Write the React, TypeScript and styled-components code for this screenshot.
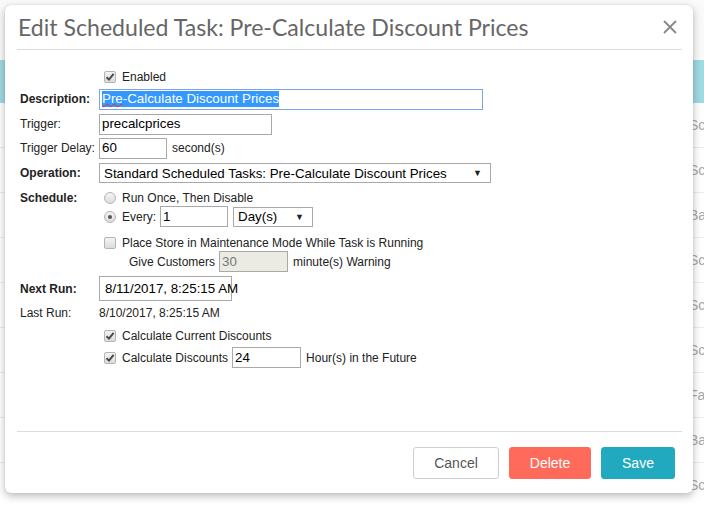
import React from "react";
import styled, { createGlobalStyle } from "styled-components";

const GlobalStyle = createGlobalStyle`
  html, body {
    margin: 0;
    padding: 0;
    background: #fafafa;
    font-family: "Liberation Sans", Arial, sans-serif;
  }
`;

const Page = styled.div`
  position: relative;
  width: 704px;
  height: 506px;
  overflow: hidden;
  background: #fafafa;
`;

const TopStrip = styled.div`
  height: 60px;
`;

const TableHead = styled.div`
  height: 43px;
  background: #a0dae3;
`;

const TableRow = styled.div`
  height: 44px;
  display: flex;
  align-items: center;
  padding-left: 689px;
  border-bottom: 1px solid #ececec;
  background: #fff;
  color: #a8a8a8;
  font-size: 14px;
  white-space: nowrap;
`;

const Modal = styled.div`
  position: absolute;
  left: 5px;
  top: 5px;
  width: 688px;
  height: 488px;
  box-sizing: border-box;
  padding: 0 11px 0 12px;
  display: flex;
  flex-direction: column;
  background: #fff;
  border-radius: 6px;
  box-shadow: 0 3px 9px rgba(0, 0, 0, 0.28), 0 0 1px rgba(0, 0, 0, 0.2);
`;

const Header = styled.div`
  height: 44px;
  display: flex;
  align-items: center;
  justify-content: space-between;
  border-bottom: 1px solid #dcdcdc;
`;

const Title = styled.h1`
  margin: 0;
  padding-left: 1px;
  font-family: Lato, "Open Sans", sans-serif;
  font-weight: 400;
  font-size: 23.1px;
  color: #666;
`;

const Close = styled.button`
  width: 14px;
  height: 14px;
  margin-right: 5px;
  padding: 0;
  border: 0;
  background: none;
  display: flex;
  cursor: pointer;
`;

const Body = styled.div`
  flex: 1;
  padding: 18px 0 0 3px;
  font-size: 12px;
  color: #222;
`;

const Row = styled.div<{ $mt?: number; $h: number }>`
  display: flex;
  align-items: center;
  margin-top: ${(p) => p.$mt ?? 0}px;
  height: ${(p) => p.$h}px;
  white-space: nowrap;
`;

const Label = styled.div<{ $bold?: boolean }>`
  width: 79px;
  flex-shrink: 0;
  font-weight: ${(p) => (p.$bold ? 700 : 400)};
  color: #222;
`;

const Field = styled.div<{ $indent?: number }>`
  display: flex;
  align-items: center;
  padding-left: ${(p) => p.$indent ?? 0}px;
`;

const Box = styled.span<{ $round?: boolean }>`
  width: 12px;
  height: 12px;
  margin: 0 6px 0 5px;
  box-sizing: border-box;
  flex-shrink: 0;
  display: flex;
  align-items: center;
  justify-content: center;
  border: 1px solid #b4b4b4;
  border-radius: ${(p) => (p.$round ? "50%" : "2px")};
  background: linear-gradient(#f4f4f4, #dcdcdc);
`;

const Dot = styled.span`
  width: 4px;
  height: 4px;
  border-radius: 50%;
  background: #555;
`;

const Text = styled.span`
  margin-right: 4px;
`;

const TextBox = styled.div<{ $w: number; $h?: number; $focus?: boolean; $disabled?: boolean }>`
  width: ${(p) => p.$w}px;
  height: ${(p) => p.$h ?? 21}px;
  box-sizing: border-box;
  display: flex;
  align-items: center;
  padding: 0 ${(p) => (p.$h ? 5 : 2)}px;
  border: 1px solid ${(p) => (p.$focus ? "#7da2e6" : "#a9a9a9")};
  background: ${(p) => (p.$disabled ? "#ebebe4" : "#fff")};
  color: ${(p) => (p.$disabled ? "#777" : "#000")};
  font-size: 13.33px;
  line-height: 16px;
  flex-shrink: 0;
  margin-right: 5px;
`;

const Selected = styled.span`
  background: #3399ff;
  color: #fff;
`;

const Squiggle = styled.span`
  text-decoration: underline wavy #e03030;
  text-decoration-thickness: 1px;
  text-underline-offset: 0px;
`;

const Select = styled.div<{ $w: number }>`
  width: ${(p) => p.$w}px;
  height: 20px;
  box-sizing: border-box;
  display: flex;
  align-items: center;
  justify-content: space-between;
  padding: 0 8px 0 4px;
  border: 1px solid #a9a9a9;
  background: #fff;
  color: #000;
  font-size: 13.33px;
  flex-shrink: 0;
`;

const Arrow = styled.span`
  font-size: 9px;
  color: #222;
`;

const Footer = styled.div`
  height: 62px;
  box-sizing: border-box;
  border-top: 1px solid #dcdcdc;
  display: flex;
  justify-content: flex-end;
  align-items: flex-start;
  gap: 10px;
  padding: 15px 7px 0 0;
`;

const Button = styled.button<{ $kind?: "cancel" | "delete" | "save"; $w: number }>`
  width: ${(p) => p.$w}px;
  height: 32px;
  border-radius: 3px;
  font-family: "Liberation Sans", Arial, sans-serif;
  font-size: 14px;
  cursor: pointer;
  border: 1px solid
    ${(p) => (p.$kind === "cancel" ? "#cfcfcf" : p.$kind === "delete" ? "#ff6a5a" : "#21aabf")};
  background: ${(p) => (p.$kind === "cancel" ? "#fff" : p.$kind === "delete" ? "#ff6a5a" : "#21aabf")};
  color: ${(p) => (p.$kind === "cancel" ? "#555" : "#fff")};
`;

const Check = ({ on }: { on?: boolean }) => (
  <Box>
    {on && (
      <svg width="10" height="10" viewBox="0 0 10 10">
        <path d="M1.5 5.2 L4 7.6 L8.6 1.8" fill="none" stroke="#4a4a4a" strokeWidth="2" />
      </svg>
    )}
  </Box>
);

const Radio = ({ on }: { on?: boolean }) => <Box $round>{on && <Dot />}</Box>;

const backgroundRows = ["Scheduled", "Scheduled", "Batch", "Scheduled", "Scheduled", "Scheduled", "Failed", "Batch", "Scheduled"];

export default function App() {
  return (
    <Page>
      <GlobalStyle />
      <TopStrip />
      <TableHead />
      {backgroundRows.map((t, i) => (
        <TableRow key={i}>{t}</TableRow>
      ))}

      <Modal>
        <Header>
          <Title>Edit Scheduled Task: Pre-Calculate Discount Prices</Title>
          <Close aria-label="Close">
            <svg width="14" height="14" viewBox="0 0 14 14">
              <path d="M1 1 L13 13 M13 1 L1 13" stroke="#888" strokeWidth="1.8" />
            </svg>
          </Close>
        </Header>

        <Body>
          <Row $h={18}>
            <Label />
            <Field>
              <Check on />
              <Text>Enabled</Text>
            </Field>
          </Row>
          <Row $mt={2} $h={22}>
            <Label $bold>Description:</Label>
            <TextBox $w={384} $focus>
              <Selected>
                <Squiggle>Pre</Squiggle>-Calculate Discount Prices
              </Selected>
            </TextBox>
          </Row>
          <Row $mt={3} $h={22}>
            <Label>Trigger:</Label>
            <TextBox $w={173}>precalcprices</TextBox>
          </Row>
          <Row $mt={2} $h={22}>
            <Label>Trigger Delay:</Label>
            <TextBox $w={68}>60</TextBox>
            <Text>second(s)</Text>
          </Row>
          <Row $mt={4} $h={20}>
            <Label $bold>Operation:</Label>
            <Select $w={392}>
              Standard Scheduled Tasks: Pre-Calculate Discount Prices
              <Arrow>▼</Arrow>
            </Select>
          </Row>
          <Row $mt={7} $h={16}>
            <Label $bold>Schedule:</Label>
            <Field>
              <Radio />
              <Text>Run Once, Then Disable</Text>
            </Field>
          </Row>
          <Row $h={21}>
            <Label />
            <Field>
              <Radio on />
              <Text>Every:</Text>
              <TextBox $w={68}>1</TextBox>
              <Select $w={80}>
                Day(s)
                <Arrow>▼</Arrow>
              </Select>
            </Field>
          </Row>
          <Row $mt={8} $h={16}>
            <Label />
            <Field>
              <Check />
              <Text>Place Store in Maintenance Mode While Task is Running</Text>
            </Field>
          </Row>
          <Row $h={21}>
            <Label />
            <Field $indent={30}>
              <Text>Give Customers</Text>
              <TextBox $w={69} $disabled>30</TextBox>
              <Text>minute(s) Warning</Text>
            </Field>
          </Row>
          <Row $mt={4} $h={25}>
            <Label $bold>Next Run:</Label>
            <TextBox $w={133} $h={25}>8/11/2017, 8:25:15 AM</TextBox>
          </Row>
          <Row $mt={4} $h={16}>
            <Label>Last Run:</Label>
            <Text>8/10/2017, 8:25:15 AM</Text>
          </Row>
          <Row $mt={7} $h={16}>
            <Label />
            <Field>
              <Check on />
              <Text>Calculate Current Discounts</Text>
            </Field>
          </Row>
          <Row $mt={3} $h={21}>
            <Label />
            <Field>
              <Check on />
              <Text>Calculate Discounts</Text>
              <TextBox $w={69}>24</TextBox>
              <Text>Hour(s) in the Future</Text>
            </Field>
          </Row>
        </Body>

        <Footer>
          <Button $kind="cancel" $w={86}>Cancel</Button>
          <Button $kind="delete" $w={82}>Delete</Button>
          <Button $kind="save" $w={74}>Save</Button>
        </Footer>
      </Modal>
    </Page>
  );
}
